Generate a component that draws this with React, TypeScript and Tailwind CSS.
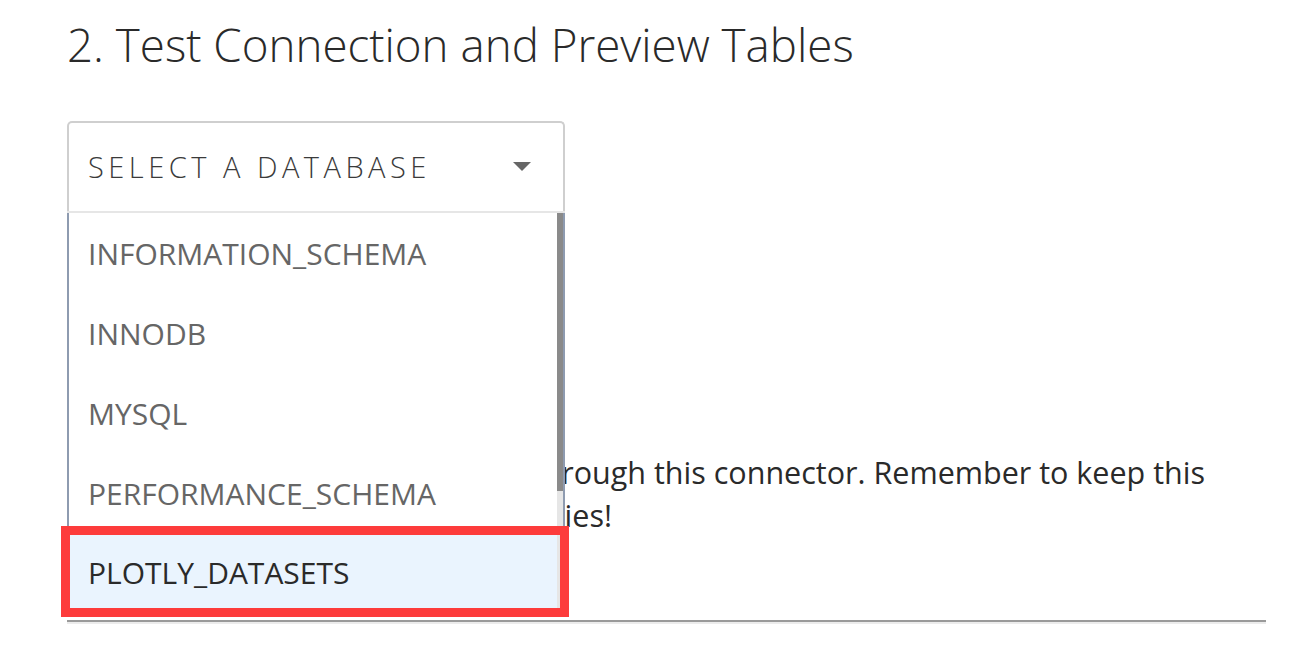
import React from 'react';

const databases = ['INFORMATION_SCHEMA', 'INNODB', 'MYSQL', 'PERFORMANCE_SCHEMA', 'PLOTLY_DATASETS'];

const App: React.FC = () => {
  const selected = 'PLOTLY_DATASETS';

  return (
    <div className="min-h-screen bg-white pl-[67px] pr-[45px] font-['Open_Sans','Liberation_Sans',sans-serif] text-[#333]">
      {/* Heading */}
      <h2 className="pt-[12px] text-[45.7px] leading-[64px] font-light text-[#2a2a2a]">
        2. Test Connection and Preview Tables
      </h2>

      {/* Select */}
      <div className="relative mt-[45px] w-[498px]">
        <div className="flex h-[90px] items-center justify-between rounded-t-[5px] border-2 border-b-0 border-[#cfcfcf] pl-[19px] pr-[32px]">
          <span className="text-[29px] font-light tracking-[4.5px] text-[#3a3a3a]">SELECT A DATABASE</span>
          <svg width="18" height="10" viewBox="0 0 18 10">
            <path d="M0 0 L18 0 L9 9 Z" fill="#666" />
          </svg>
        </div>

        {/* Menu */}
        <div className="absolute left-0 top-full z-10 flex w-[498px] border-t-2 border-[#e6e6e6] bg-white">
          <div className="flex-1 border-l-2 border-[#8e9bb0]">
            {databases.map(db => (
              <div
                key={db}
                className={`relative flex h-[80px] items-center pl-[19px] text-[30px] ${db === selected ? 'bg-[#eaf4fe] text-[#2a2a2a] border-b-2 border-[#8e9bb0]' : 'text-[#666]'}`}
              >
                {db}
                {db === selected && (
                  <div className="pointer-events-none absolute left-[-8px] right-[-12px] top-[-7px] bottom-[-6px] border-[9px] border-[#fd3b3b]" />
                )}
              </div>
            ))}
          </div>
          {/* Scrollbar */}
          <div className="flex w-[8px] flex-col border-r-2 border-[#8e9bb0] bg-[#e6e6e6]">
            <div className="h-[278px] bg-[#8a8a8a]" />
          </div>
        </div>
      </div>

      {/* Paragraph under the open menu */}
      <div className="mt-[240px] text-[30.5px] leading-[43px] text-[#2a2a2a]">
        <div className="w-[1138px] whitespace-nowrap text-right">
          Queries are sent through this connector. Remember to keep this
        </div>
        <div className="w-[545px] whitespace-nowrap text-right">
          user limited to read-only queries!
        </div>
      </div>

      {/* Divider */}
      <div className="mt-[83px] h-[4px] w-[1199px] border-t-2 border-[#9a9a9a] bg-[#ececec]" />
    </div>
  );
};

export default App;
